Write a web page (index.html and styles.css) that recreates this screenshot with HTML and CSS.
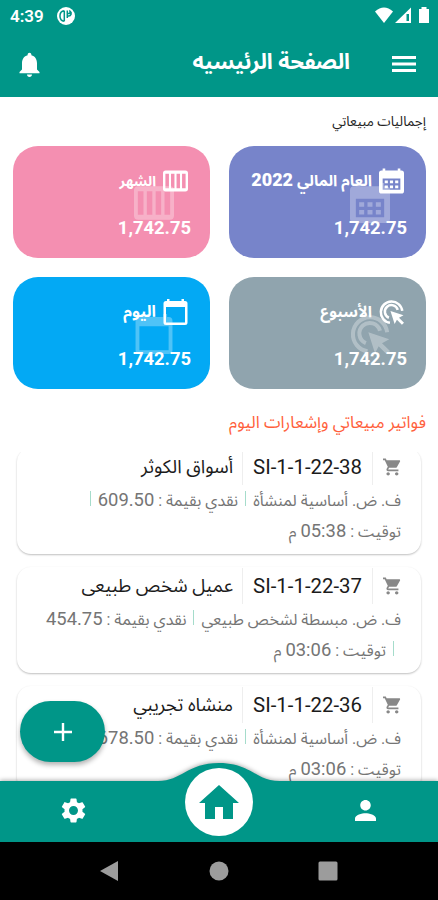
FILE: index.html
```html
<!DOCTYPE html>
<html lang="ar" dir="rtl">
<head>
    <meta charset="UTF-8">
    <title>الصفحة الرئيسيه</title>
    <link rel="stylesheet" href="styles.css">
</head>
<body>

<!-- icons used more than once -->
<svg class="icon-defs" width="0" height="0">
    <symbol id="icon-year" viewBox="0 0 24 24">
        <path fill-rule="evenodd" d="M3.500 0h2.500v2h12V0h2.500v2h1q2.500 0 2.500 2.500v17q0 2.500-2.500 2.500h-19Q0 24 0 21.500v-17Q0 2 2.500 2h1zM3.500 9.500v11h17v-11zM5.500 11.500h3v2.700h-3zM10.500 11.500h3v2.700h-3zM15.500 11.500h3v2.700h-3zM5.500 16.200h3v2.700h-3zM10.500 16.200h3v2.700h-3zM15.500 16.200h3v2.700h-3z"/>
    </symbol>
    <symbol id="icon-month" viewBox="0 0 24 20">
        <path fill-rule="evenodd" d="M2.500 0h19Q24 0 24 2.500v15q0 2.500-2.500 2.500h-19Q0 20 0 17.500v-15Q0 0 2.500 0zM2.300 3v14h3.400V3zM7.700 3v14h3.300V3zM13 3v14h3.300V3zM18.300 3v14h3.400V3z"/>
    </symbol>
    <symbol id="icon-week" viewBox="0 0 24 24">
        <path fill="none" stroke="currentColor" stroke-width="2.400" d="M10.500 22.400A10.300 10.300 0 1 1 22.300 11"/>
        <path fill="none" stroke="currentColor" stroke-width="2.400" d="M9.500 17.500A6.300 6.300 0 1 1 18 10"/>
        <path d="M11 11l12.500 4.200-4.300 2.300 4.800 4.700-2 2-4.800-4.800-2.200 4.100z"/>
    </symbol>
    <symbol id="icon-day" viewBox="0 0 24 26">
        <path fill-rule="evenodd" d="M3.500 0H6v2h12V0h2.500v2h1Q24 2 24 4.500v19q0 2.500-2.500 2.500h-19Q0 26 0 23.500v-19Q0 2 2.500 2h1zM2.500 8v15.500h19V8z"/>
    </symbol>
    <symbol id="icon-cart" viewBox="1 2 21 20">
        <path d="M7 18c-1.100 0-1.990.9-1.990 2S5.900 22 7 22s2-.9 2-2-.9-2-2-2zM1 2v2h2l3.600 7.590-1.350 2.450C4.520 15.370 5.480 17 7 17h12v-2H7l1.100-2h7.450c.75 0 1.410-.41 1.750-1.030l3.580-6.490C21.250 4.820 20.760 4 20 4H5.210L4.270 2H1zm16 16c-1.100 0-1.990.9-1.990 2s.89 2 1.990 2 2-.9 2-2-.9-2-2-2z"/>
    </symbol>
</svg>

<div class="status-bar">
    <span class="time">4:39</span>
    <svg class="status-app" viewBox="0 0 18 18">
        <circle cx="9" cy="9" r="9" fill="#fff"/>
        <path fill="none" stroke="#009688" stroke-width="1.500" d="M7.300 3.800v10.500M7.300 3.800C1.500 4.500 1.500 13.500 7.300 14.300M10.300 3.500v7.500M10.300 9h1.200a2.600 2.600 0 0 0 1.500-4.800v2.300h-2.700"/>
    </svg>
    <svg class="status-signal" viewBox="0 0 54 17">
        <path d="M9 16L0 4.500Q9-3.500 18 4.500z"/>
        <path fill-rule="evenodd" d="M20 16L36 0.500V16zM31.500 7v7h2.500V7z"/>
        <path d="M46.500 0h5v2H54v14H44V2h2.500z"/>
    </svg>
</div>

<div class="header">
    <svg class="menu-icon" viewBox="0 0 24 16"><path d="M0 0h24v3H0zM0 6.500h24v3H0zM0 13h24v3H0z"/></svg>
    <h1>الصفحة الرئيسيه</h1>
    <svg class="bell-icon" viewBox="4 2 16 20"><path d="M12 22c1.100 0 2-.9 2-2h-4c0 1.100.89 2 2 2zm6-6v-5c0-3.070-1.640-5.640-4.500-6.320V4c0-.83-.67-1.500-1.500-1.500s-1.500.67-1.500 1.500v.68C7.630 5.360 6 7.920 6 11v5l-2 2v1h16v-1l-2-2z"/></svg>
</div>

<div class="content">
    <h2 class="totals-title">إجماليات مبيعاتي</h2>
    <div class="totals">
        <div class="total year">
            <svg class="shade"><use href="#icon-year"/></svg>
            <div class="total-name"><svg><use href="#icon-year"/></svg><span>العام المالي <b>2022</b></span></div>
            <div class="amount">1,742.75</div>
        </div>
        <div class="total month">
            <svg class="shade"><use href="#icon-month"/></svg>
            <div class="total-name"><svg><use href="#icon-month"/></svg><span>الشهر</span></div>
            <div class="amount">1,742.75</div>
        </div>
        <div class="total week">
            <svg class="shade"><use href="#icon-week"/></svg>
            <div class="total-name"><svg><use href="#icon-week"/></svg><span>الأسبوع</span></div>
            <div class="amount">1,742.75</div>
        </div>
        <div class="total day">
            <svg class="shade"><use href="#icon-day"/></svg>
            <div class="total-name"><svg><use href="#icon-day"/></svg><span>اليوم</span></div>
            <div class="amount">1,742.75</div>
        </div>
    </div>

    <h2 class="invoices-title">فواتير مبيعاتي وإشعارات اليوم</h2>
    <div class="invoices">
        <div class="invoice">
            <div class="invoice-head">
                <svg><use href="#icon-cart"/></svg>
                <span class="number" dir="ltr">SI-1-1-22-38</span>
                <span class="customer">أسواق الكوثر</span>
            </div>
            <p>ف. ض. أساسية لمنشأة<i></i>نقدي بقيمة : <span>609.50</span><i></i></p>
            <p>توقيت : <span>05:38</span> م</p>
        </div>
        <div class="invoice">
            <div class="invoice-head">
                <svg><use href="#icon-cart"/></svg>
                <span class="number" dir="ltr">SI-1-1-22-37</span>
                <span class="customer">عميل شخص طبيعى</span>
            </div>
            <p>ف. ض. مبسطة لشخص طبيعي<i></i>نقدي بقيمة : <span>454.75</span></p>
            <p><i></i>توقيت : <span>03:06</span> م</p>
        </div>
        <div class="invoice">
            <div class="invoice-head">
                <svg><use href="#icon-cart"/></svg>
                <span class="number" dir="ltr">SI-1-1-22-36</span>
                <span class="customer">منشاه تجريبي</span>
            </div>
            <p>ف. ض. أساسية لمنشأة<i></i>نقدي بقيمة : <span>678.50</span><i></i></p>
            <p>توقيت : <span>03:06</span> م</p>
        </div>
    </div>
</div>

<button class="add-button" aria-label="إضافة">
    <svg viewBox="0 0 18 18"><path d="M7.800 0h2.400v7.800H18v2.400h-7.800V18H7.800v-7.800H0V7.800h7.800z"/></svg>
</button>

<div class="bottom-nav">
    <svg class="nav-shape" viewBox="0 0 438 80"><path d="M0 19H158C182 19 187 1 219 1S256 19 280 19H438V80H0z"/></svg>
    <svg class="person-icon" viewBox="4 4 16 16"><path d="M12 12c2.210 0 4-1.790 4-4s-1.790-4-4-4-4 1.790-4 4 1.790 4 4 4zm0 2c-2.670 0-8 1.340-8 4v2h16v-2c0-2.660-5.330-4-8-4z"/></svg>
    <div class="home-button">
        <svg viewBox="2 3 20 17"><path d="M10 20v-6h4v6h5v-8h3L12 3 2 12h3v8z"/></svg>
    </div>
    <svg class="gear-icon" viewBox="2 2 20 20"><path d="M19.140 12.940c.04-.3.060-.61.060-.94 0-.32-.02-.64-.07-.94l2.030-1.580c.18-.14.23-.41.12-.61l-1.920-3.320c-.12-.22-.37-.29-.59-.22l-2.390.96c-.5-.38-1.030-.7-1.620-.94l-.36-2.540c-.04-.24-.24-.41-.48-.41h-3.840c-.24 0-.43.17-.47.41l-.36 2.540c-.59.24-1.130.57-1.620.94l-2.390-.96c-.22-.08-.47 0-.59.22L2.740 8.870c-.12.21-.08.47.12.61l2.030 1.580c-.05.3-.09.63-.09.94s.02.64.07.94l-2.030 1.580c-.18.14-.23.41-.12.61l1.920 3.320c.12.22.37.29.59.22l2.390-.96c.5.38 1.030.7 1.620.94l.36 2.540c.05.24.24.41.48.41h3.840c.24 0 .44-.17.47-.41l.36-2.540c.59-.24 1.130-.56 1.620-.94l2.390.96c.22.08.47 0 .59-.22l1.920-3.320c.12-.22.07-.47-.12-.61l-2.010-1.580zM12 15.600c-1.980 0-3.600-1.620-3.600-3.600s1.620-3.600 3.600-3.600 3.600 1.620 3.600 3.600-1.620 3.600-3.600 3.600z"/></svg>
</div>

<div class="system-nav">
    <svg viewBox="0 0 20 20"><path d="M18 0v20L0 10z"/></svg>
    <svg viewBox="0 0 20 20"><circle cx="10" cy="10" r="9.500"/></svg>
    <svg viewBox="0 0 20 20"><rect x="0.500" y="0.500" width="19" height="19" rx="1.500"/></svg>
</div>

</body>
</html>
```

FILE: styles.css
```css
* {
    box-sizing: border-box;
}
body {
    margin: 0;
    width: 438px;
    height: 900px;
    display: flex;
    flex-direction: column;
    position: relative;
    overflow: hidden;
    background: #fff;
    font-family: Roboto, "Noto Sans Arabic", "DejaVu Sans", sans-serif;
}
svg {
    fill: currentColor;
    flex: none;
}
h1, h2, p {
    margin: 0;
}
.icon-defs {
    position: absolute;
}

/* top bars */
.status-bar {
    direction: ltr;
    display: flex;
    align-items: center;
    height: 31px;
    padding: 0 9px 0 10px;
    background: #009688;
    color: #fff;
}
.time {
    width: 47px;
    font-size: 17px;
    font-weight: 600;
}
.status-app {
    width: 18px;
    height: 18px;
}
.status-signal {
    width: 54px;
    height: 17px;
    margin-left: auto;
}
.header {
    display: flex;
    align-items: center;
    height: 66px;
    flex: none;
    padding: 0 22px 0 19px;
    background: #009688;
    color: #fff;
}
.menu-icon {
    width: 24px;
    height: 16px;
}
.header h1 {
    margin-right: 42px;
    padding-bottom: 4px;
    font-size: 21.7px;
    line-height: 40px;
    white-space: nowrap;
}
.bell-icon {
    width: 21px;
    height: 25px;
    margin-right: auto;
}

/* totals */
.content {
    flex: 1;
    min-height: 0;
    display: flex;
    flex-direction: column;
    overflow: hidden;
}
.totals-title {
    height: 49px;
    flex: none;
    padding-right: 12px;
    font-size: 13.5px;
    font-weight: 400;
    line-height: 48px;
    color: #222;
}
.totals {
    display: grid;
    grid-template-columns: 197px 197px;
    grid-auto-rows: 112px;
    gap: 19px;
    padding: 0 12px;
}
.total {
    position: relative;
    padding: 20px 19px 0;
    border-radius: 25px;
    color: #fff;
}
.year { background: #7784ca; }
.month { background: #f48fb1; }
.week { background: #90a4ae; }
.day { background: #03a9f4; }
.total-name {
    display: flex;
    align-items: center;
    gap: 7px;
    height: 30px;
    padding-right: 3px;
    font-size: 15.5px;
    font-weight: 700;
    white-space: nowrap;
}
.total-name svg {
    width: 25px;
    height: 26px;
}
.total-name b {
    font-size: 18px;
}
.month .total-name span {
    font-size: 14px;
}
.day .total-name span {
    font-size: 16px;
}
.amount {
    margin-top: 21px;
    font-size: 18.4px;
    font-weight: 700;
    line-height: 21px;
}
/* faded copy of the icon behind the text */
.shade {
    position: absolute;
    top: 37px;
    right: 36px;
    width: 40px;
    height: 40px;
    opacity: 0.3;
}

/* invoices */
.invoices-title {
    height: 63px;
    flex: none;
    padding-right: 12px;
    font-size: 16.8px;
    font-weight: 400;
    line-height: 66px;
    color: #ff5f3c;
}
.invoices {
    flex: 1;
    min-height: 0;
    padding: 0 17px;
    overflow: hidden;
}
.invoice {
    height: 106px;
    margin-bottom: 13px;
    padding: 0 20px 0 19px;
    border-radius: 14px;
    background: #fff;
    box-shadow: 0 1px 2px rgba(0, 0, 0, 0.25);
    color: #757575;
}
.invoice:first-child {
    margin-top: -4px;
}
.invoice-head {
    display: flex;
    align-items: center;
    height: 38px;
    color: #1b1b1b;
}
.invoice-head svg {
    width: 18px;
    height: 18px;
    margin-left: 10px;
    color: #888;
}
.number, .customer {
    padding: 0 10px;
    border-right: 1px solid #eee;
    font-size: 20.4px;
    line-height: 36px;
    white-space: nowrap;
}
.customer {
    padding-right: 9px;
    font-size: 18.7px;
}
.invoice p {
    height: 31px;
    font-size: 16px;
    line-height: 27px;
    white-space: nowrap;
}
.invoice p span {
    font-size: 18.4px;
}
.invoice i {
    display: inline-block;
    width: 1px;
    height: 15px;
    margin: 0 7px;
    background: #a5dccb;
}

.add-button {
    position: absolute;
    left: 20px;
    top: 701px;
    width: 85px;
    height: 61px;
    padding: 0;
    border: none;
    border-radius: 31px;
    background: #009688;
    color: #fff;
    box-shadow: 0 3px 5px rgba(0, 0, 0, 0.3);
}
.add-button svg {
    width: 18px;
    height: 18px;
    display: block;
    margin: 0 auto;
}

/* bottom bars */
.bottom-nav {
    position: relative;
    display: flex;
    align-items: center;
    justify-content: space-between;
    height: 80px;
    flex: none;
    margin-top: -80px;
    padding: 0 62px 0 61px;
    color: #fff;
}
.nav-shape {
    position: absolute;
    inset: 0;
    width: 438px;
    height: 80px;
    color: #009688;
    filter: drop-shadow(0 -1px 2px rgba(0, 0, 0, 0.3));
}
.person-icon, .gear-icon, .home-button {
    position: relative;
}
.person-icon {
    width: 21px;
    height: 21px;
    margin-top: 17px;
}
.gear-icon {
    width: 25px;
    height: 25px;
    margin-top: 17px;
}
.home-button {
    display: flex;
    align-items: center;
    justify-content: center;
    width: 68px;
    height: 68px;
    margin-right: 3px;
    border-radius: 50%;
    background: #fff;
    color: #009688;
}
.home-button svg {
    width: 40px;
    height: 34px;
}
.system-nav {
    direction: ltr;
    display: flex;
    align-items: center;
    justify-content: center;
    gap: 89px;
    height: 58px;
    flex: none;
    background: #000;
    color: #9c9c9c;
}
.system-nav svg {
    width: 20px;
    height: 20px;
}
```
